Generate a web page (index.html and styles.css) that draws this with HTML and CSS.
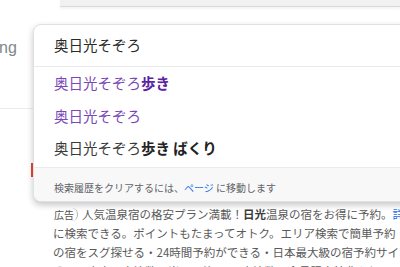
FILE: index.html
```html
<!DOCTYPE html>
<html lang="ja">
<head>
<meta charset="utf-8">
<link rel="stylesheet" href="styles.css">
</head>
<body>
<div class="page">
  <div class="topbar"></div>
  <div class="header"><span class="brand">ng</span></div>
  <div class="marker"></div>
  <div class="ads">
    <div class="ad-line"><span class="badge">広告</span>人気温泉宿の格安プラン満載！<b>日光</b>温泉の宿をお得に予約。<span class="link">詳</span></div>
    <div class="ad-line">に検索できる。ポイントもたまってオトク。エリア検索で簡単予約</div>
    <div class="ad-line">の宿をスグ探せる・24時間予約ができる・日本最大級の宿予約サイト</div>
    <div class="ad-line">そこの充実の宿泊数、当日予約OKの宿泊数、会員限定特典あり</div>
  </div>

  <div class="dropdown">
    <div class="query">奥日光そぞろ</div>
    <ul class="suggestions">
      <li class="visited">奥日光そぞろ<b>歩き</b></li>
      <li class="visited">奥日光そぞろ</li>
      <li>奥日光そぞろ<b>歩き ばくり</b></li>
    </ul>
    <div class="footer">検索履歴をクリアするには、<span class="flink">ページ</span> に移動します</div>
  </div>
</div>
</body>
</html>
```

FILE: styles.css
```css
html, body {
  margin: 0;
  padding: 0;
  background: #ffffff;
}
body {
  width: 400px;
  height: 267px;
  overflow: hidden;
  font-family: "Noto Sans CJK JP", "Noto Sans", sans-serif;
}
.page {
  position: relative;
  width: 400px;
  height: 267px;
  overflow: hidden;
}
.topbar {
  margin-left: 60px;
  height: 6px;
  background: #f1f1f1;
  border-bottom: 1px solid #d9d9d9;
  box-shadow: 0 2px 3px rgba(0, 0, 0, 0.05);
}
.header {
  height: 101px;
  border-bottom: 1px solid #ebebeb;
  display: flex;
  align-items: flex-start;
}
.brand {
  margin-top: 31px;
  margin-left: -1px;
  font-family: "Liberation Sans", Arial, sans-serif;
  font-size: 16px;
  line-height: 20px;
  color: #80868b;
}
.marker {
  margin-top: 54px;
  margin-left: 31px;
  width: 2px;
  height: 14px;
  background: #e8452c;
}
.ads {
  margin-top: 28px;
  padding-left: 53px;
  font-size: 11.5px;
  line-height: 19px;
  color: #5a5a5a;
  white-space: nowrap;
}
.ad-line b {
  color: #3c3c3c;
  font-weight: bold;
}
.badge {
  display: inline-block;
  font-size: 10px;
  line-height: 13px;
  padding: 0 3px 0 1px;
  margin-right: 4px;
  border-right: 1px solid #b5b5b5;
  border-radius: 0 6px 6px 0;
  color: #545454;
}
.link {
  color: #1a73e8;
}
.dropdown {
  position: absolute;
  left: 33px;
  top: 24px;
  width: 420px;
  background: #ffffff;
  border: 1px solid #dfe1e5;
  border-radius: 8px;
  box-shadow: 0 3px 6px rgba(32, 33, 36, 0.25);
  overflow: hidden;
}
.query {
  height: 42px;
  box-sizing: border-box;
  padding-left: 20px;
  font-size: 14.5px;
  line-height: 40px;
  color: #2a2a2a;
  border-bottom: 1px solid #e8eaed;
}
.suggestions {
  list-style: none;
  margin: 0;
  padding: 0 0 2px 0;
}
.suggestions li {
  height: 32.5px;
  line-height: 32px;
  padding-left: 20px;
  font-size: 14.5px;
  color: #3a3a3a;
}
.suggestions li b {
  font-weight: bold;
  color: #222222;
}
.suggestions li.visited {
  color: #7848b8;
}
.suggestions li.visited b {
  color: #5a22a0;
}
.footer {
  height: 34px;
  padding-left: 20px;
  padding-top: 13px;
  box-sizing: border-box;
  background: #f8f8f8;
  border-top: 1px solid #ececec;
  font-size: 10px;
  line-height: 14px;
  color: #5f6368;
}
.flink {
  color: #1a73e8;
}
```
